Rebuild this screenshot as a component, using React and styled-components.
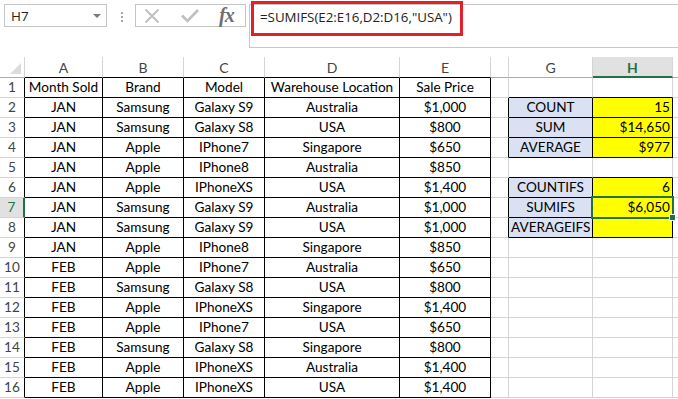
import React from 'react';
import styled, { createGlobalStyle } from 'styled-components';

const Global = createGlobalStyle`
  html, body {
    margin: 0;
    padding: 0;
    background: #ffffff;
    overflow: hidden;
  }
  body {
    font-family: Lato, "Liberation Sans", sans-serif;
  }
`;

const GRID = '#d4d4d4';
const INK = '#000000';
const GREEN = '#217346';

// column widths include the 1px right border of each column
const COLS = [25, 78, 81, 81, 135, 91, 18, 84, 80, 64];
const LETTERS = ['', 'A', 'B', 'C', 'D', 'E', '', 'G', 'H', ''];

const Page = styled.div`
  width: 678px;
  height: 399px;
  overflow: hidden;
`;

// ---- formula bar ----
const TopBar = styled.div`
  display: flex;
  align-items: flex-start;
  height: 57px;
  box-sizing: border-box;
  padding: 4px 0 0 4px;
  font-family: "Open Sans", "Noto Sans", sans-serif;
`;

const NameBox = styled.div`
  width: 103px;
  height: 23px;
  box-sizing: border-box;
  border: 1px solid #c6c6c6;
  display: flex;
  align-items: center;
  justify-content: space-between;
  padding: 0 5px 0 6px;
  font-size: 13.5px;
  color: #222;
`;

const Caret = styled.span`
  width: 0;
  height: 0;
  border-left: 4px solid transparent;
  border-right: 4px solid transparent;
  border-top: 4px solid #7a7a7a;
`;

const Dots = styled.div`
  display: flex;
  flex-direction: column;
  gap: 2px;
  margin: 8px 12px 0 14px;
  span {
    width: 2px;
    height: 2px;
    background: #a6a6a6;
  }
`;

const IconBox = styled.div`
  width: 111px;
  height: 23px;
  box-sizing: border-box;
  border: 1px solid #c6c6c6;
  display: flex;
  align-items: center;
  padding: 0 10px 0 8px;
  gap: 21px;
`;

const Fx = styled.span`
  font-family: "Liberation Serif", serif;
  font-style: italic;
  font-weight: bold;
  font-size: 20px;
  color: #6f6f6f;
  letter-spacing: -1px;
  margin-left: -1px;
`;

const FormulaInput = styled.div`
  position: relative;
  flex: 1;
  margin-left: 3px;
  height: 44px;
  box-sizing: border-box;
  border: 1px solid #c6c6c6;
  border-right: none;
  padding: 3px 0 0 10px;
  font-size: 13.3px;
  line-height: 18px;
  color: #222;
  white-space: nowrap;
`;

const RedBox = styled.div`
  position: absolute;
  left: 1px;
  top: -4px;
  width: 212px;
  height: 35px;
  box-sizing: border-box;
  border: 3px solid #e3202a;
`;

// ---- sheet ----
const Sheet = styled.div`
  display: grid;
  grid-template-columns: ${COLS.map((w) => `${w}px`).join(' ')};
  grid-template-rows: 21px;
  grid-auto-rows: 20px;
  font-size: 13.6px;
`;

const Corner = styled.div`
  position: relative;
  box-sizing: border-box;
  border-right: 1px solid ${GRID};
  border-bottom: 1px solid #ababab;
  &::after {
    content: '';
    position: absolute;
    right: 3px;
    bottom: 3px;
    border-left: 11px solid transparent;
    border-bottom: 11px solid #dcdcdc;
  }
`;

const ColHead = styled.div`
  box-sizing: border-box;
  border-right: 1px solid ${GRID};
  border-bottom: ${(p) => (p.$active ? `2px solid ${GREEN}` : `1px solid ${p.$edge}`)};
  background: ${(p) => (p.$active ? '#e1e1e1' : '#ffffff')};
  color: ${(p) => (p.$active ? GREEN : '#444')};
  font-weight: ${(p) => (p.$active ? 'bold' : 'normal')};
  font-size: 14px;
  text-align: center;
  line-height: 20px;
  padding-top: 1px;
`;

const RowHead = styled.div`
  box-sizing: border-box;
  border-bottom: 1px solid ${GRID};
  border-right: ${(p) => (p.$active ? `2px solid ${GREEN}` : `1px solid ${p.$edge}`)};
  background: ${(p) => (p.$active ? '#e1e1e1' : '#ffffff')};
  color: ${(p) => (p.$active ? GREEN : '#444')};
  text-align: center;
  line-height: 19px;
`;

const Cell = styled.div`
  position: relative;
  box-sizing: border-box;
  border-right: 1px solid ${(p) => p.$right};
  border-bottom: 1px solid ${(p) => p.$bottom};
  background: ${(p) => p.$bg || '#ffffff'};
  text-align: ${(p) => p.$align || 'center'};
  padding: 0 2px;
  line-height: 19px;
  white-space: nowrap;
  color: #000;
`;

const Selection = styled.div`
  position: absolute;
  z-index: 2;
  left: -2px;
  top: -2px;
  right: -2px;
  bottom: -2px;
  border: 2px solid ${GREEN};
  &::after {
    content: '';
    position: absolute;
    right: -4px;
    bottom: -4px;
    width: 5px;
    height: 5px;
    background: ${GREEN};
    border: 1px solid #fff;
  }
`;

const data = [
  ['Month Sold', 'Brand', 'Model', 'Warehouse Location', 'Sale Price'],
  ['JAN', 'Samsung', 'Galaxy S9', 'Australia', '$1,000'],
  ['JAN', 'Samsung', 'Galaxy S8', 'USA', '$800'],
  ['JAN', 'Apple', 'IPhone7', 'Singapore', '$650'],
  ['JAN', 'Apple', 'IPhone8', 'Australia', '$850'],
  ['JAN', 'Apple', 'IPhoneXS', 'USA', '$1,400'],
  ['JAN', 'Samsung', 'Galaxy S9', 'Australia', '$1,000'],
  ['JAN', 'Samsung', 'Galaxy S9', 'USA', '$1,000'],
  ['JAN', 'Apple', 'IPhone8', 'Singapore', '$850'],
  ['FEB', 'Apple', 'IPhone7', 'Australia', '$650'],
  ['FEB', 'Samsung', 'Galaxy S8', 'USA', '$800'],
  ['FEB', 'Apple', 'IPhoneXS', 'Singapore', '$1,400'],
  ['FEB', 'Apple', 'IPhone7', 'USA', '$650'],
  ['FEB', 'Samsung', 'Galaxy S8', 'Singapore', '$800'],
  ['FEB', 'Apple', 'IPhoneXS', 'Australia', '$1,400'],
  ['FEB', 'Apple', 'IPhoneXS', 'USA', '$1,400'],
];

const summary = {
  2: ['COUNT', '15'],
  3: ['SUM', '$14,650'],
  4: ['AVERAGE', '$977'],
  6: ['COUNTIFS', '6'],
  7: ['SUMIFS', '$6,050'],
  8: ['AVERAGEIFS', ''],
};

const ROWS = 16;

const boxed = (r, c) =>
  (r >= 1 && r <= 16 && c >= 1 && c <= 5) || (Boolean(summary[r]) && (c === 7 || c === 8));

const cellContent = (r, c) => {
  if (c >= 1 && c <= 5 && data[r - 1]) return { text: data[r - 1][c - 1] };
  if (summary[r] && c === 7) return { text: summary[r][0], bg: '#d9e1f2' };
  if (summary[r] && c === 8) return { text: summary[r][1], bg: '#ffff00', align: 'right' };
  return { text: '' };
};

const CancelIcon = () => (
  <svg width="16" height="16" viewBox="0 0 16 16">
    <path d="M1.5 1.5 L14.5 14.5 M14.5 1.5 L1.5 14.5" stroke="#c0c0c0" strokeWidth="2" fill="none" />
  </svg>
);

const CheckIcon = () => (
  <svg width="18" height="15" viewBox="0 0 18 15">
    <path d="M1 7.5 L6.5 13 L17 2" stroke="#c0c0c0" strokeWidth="2.6" fill="none" />
  </svg>
);

export default function App() {
  const sel = { r: 7, c: 8 };
  const cells = [];

  cells.push(<Corner key="corner" />);
  for (let c = 1; c < COLS.length; c++) {
    cells.push(
      <ColHead key={`h${c}`} $active={c === sel.c} $edge={boxed(1, c) ? INK : '#ababab'}>
        {LETTERS[c]}
      </ColHead>
    );
  }

  for (let r = 1; r <= ROWS; r++) {
    cells.push(
      <RowHead key={`r${r}`} $active={r === sel.r} $edge={boxed(r, 1) ? INK : GRID}>
        {r}
      </RowHead>
    );
    for (let c = 1; c < COLS.length; c++) {
      const { text, bg, align } = cellContent(r, c);
      const right = boxed(r, c) || boxed(r, c + 1) ? INK : GRID;
      const bottom = boxed(r, c) || boxed(r + 1, c) ? INK : GRID;
      cells.push(
        <Cell key={`${r}-${c}`} $right={right} $bottom={bottom} $bg={bg} $align={align}>
          {text}
          {r === sel.r && c === sel.c && <Selection />}
        </Cell>
      );
    }
  }

  return (
    <Page>
      <Global />
      <TopBar>
        <NameBox>
          H7
          <Caret />
        </NameBox>
        <Dots>
          <span />
          <span />
          <span />
        </Dots>
        <IconBox>
          <CancelIcon />
          <CheckIcon />
          <Fx>fx</Fx>
        </IconBox>
        <FormulaInput>
          =SUMIFS(E2:E16,D2:D16,"USA")
          <RedBox />
        </FormulaInput>
      </TopBar>
      <Sheet>{cells}</Sheet>
    </Page>
  );
}
